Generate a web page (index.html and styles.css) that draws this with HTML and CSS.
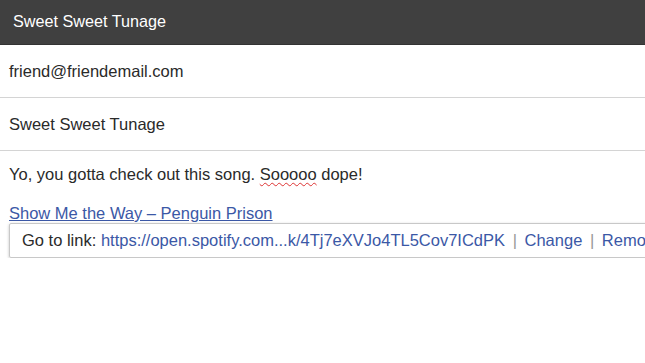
FILE: index.html
```html
<html lang="en">
<head>
    <meta charset="UTF-8">
    <title>Sweet Sweet Tunage</title>
    <link rel="stylesheet" href="styles.css">
</head>
<body>
    <div class="titlebar">Sweet Sweet Tunage</div>

    <div class="field">friend@friendemail.com</div>
    <div class="field">Sweet Sweet Tunage</div>

    <div class="editor">
        <p class="msg">Yo, you gotta check out this song. <span class="typo">Sooooo</span> dope!</p>
        <a class="song" href="#">Show Me the Way &ndash; Penguin Prison</a>
        <div class="linkbubble">
            Go to link: <a href="#">https://open.spotify.com...k/4Tj7eXVJo4TL5Cov7ICdPK</a>
            <span class="sep">|</span> <a href="#">Change</a>
            <span class="sep">|</span> <a href="#">Remove</a>
        </div>
    </div>
</body>
</html>
```
FILE: styles.css
```css
body {
    margin: 0;
    font-family: "Liberation Sans", Arial, sans-serif;
    font-size: 16.5px;
    color: #2a2a2a;
    background: #fff;
    overflow: hidden;
}
.titlebar {
    background: #404040;
    color: #fff;
    font-size: 16.2px;
    height: 44px;
    line-height: 42px;
    padding-left: 13px;
    border-bottom: 1px solid #333;
}
.field {
    height: 52px;
    line-height: 52px;
    padding-left: 9px;
    border-bottom: 1px solid #d4d4d4;
}
.editor {
    padding: 13px 0 0 9px;
    overflow: hidden;
    line-height: 20px;
}
.msg {
    margin: 0 0 19px;
}
.typo {
    text-decoration: underline wavy #d33;
    text-decoration-thickness: 1px;
    text-underline-offset: 2px;
}
a {
    color: #3b58a6;
    text-decoration: none;
}
.song {
    display: block;
    width: max-content;
    text-decoration: underline;
}
.linkbubble {
    width: 700px;
    height: 33px;
    line-height: 33px;
    padding-left: 12px;
    border: 1px solid #c8c8c8;
    border-radius: 2px;
    box-shadow: 0 1px 3px rgba(0, 0, 0, 0.25);
    white-space: nowrap;
}
.sep {
    color: #999;
    margin: 0 3px;
}
```
